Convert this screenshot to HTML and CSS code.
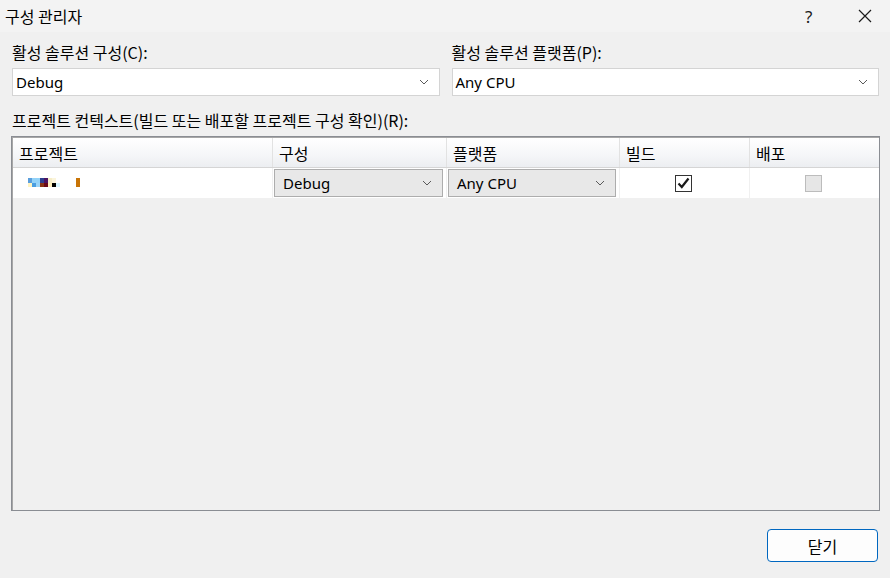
FILE: index.html
```html
<!DOCTYPE html>
<html>
<head>
  <meta charset="utf-8">
  <title>구성 관리자</title>
  <link rel="stylesheet" href="styles.css">
</head>
<body>
  <div class="titlebar">
    <span class="title">구성 관리자</span>
    <span class="title-help">?</span>
    <span class="title-close">
      <svg width="14" height="14" viewBox="0 0 14 14"><path d="M1 1 L13 13 M13 1 L1 13" stroke="#1a1a1a" stroke-width="1.2" fill="none"/></svg>
    </span>
  </div>

  <div class="content">
    <div class="solution-row">
      <div class="field">
        <label>활성 솔루션 구성(C):</label>
        <div class="combo">
          <span>Debug</span>
          <svg class="chevron" width="10" height="6" viewBox="0 0 10 6"><path d="M1 1 L5 5 L9 1" stroke="#5a5a5a" stroke-width="1" fill="none"/></svg>
        </div>
      </div>
      <div class="field">
        <label>활성 솔루션 플랫폼(P):</label>
        <div class="combo">
          <span>Any CPU</span>
          <svg class="chevron" width="10" height="6" viewBox="0 0 10 6"><path d="M1 1 L5 5 L9 1" stroke="#5a5a5a" stroke-width="1" fill="none"/></svg>
        </div>
      </div>
    </div>

    <label class="grid-label">프로젝트 컨텍스트(빌드 또는 배포할 프로젝트 구성 확인)(R):</label>

    <div class="project-grid">
      <div class="grid-head">
        <div class="head-cell">프로젝트</div>
        <div class="head-cell">구성</div>
        <div class="head-cell">플랫폼</div>
        <div class="head-cell">빌드</div>
        <div class="head-cell">배포</div>
      </div>
      <div class="grid-row">
        <div class="cell project-name">
          <svg width="56" height="10" viewBox="0 0 56 10">
            <rect x="0" y="0" width="4" height="5" fill="#5a9edc"/>
            <rect x="4" y="0" width="8" height="5" fill="#92d2f8"/>
            <rect x="12" y="0" width="4" height="5" fill="#2c3f90"/>
            <rect x="16" y="0" width="4" height="5" fill="#4b1462"/>
            <rect x="20" y="0" width="4" height="5" fill="#f6edc8"/>
            <rect x="24" y="0" width="4" height="5" fill="#fbf5dc"/>
            <rect x="0" y="5" width="4" height="4" fill="#fff4c2"/>
            <rect x="4" y="5" width="4" height="4" fill="#4a9ee0"/>
            <rect x="8" y="5" width="4" height="4" fill="#9ad4f8"/>
            <rect x="12" y="5" width="4" height="4" fill="#8a3414"/>
            <rect x="16" y="5" width="4" height="4" fill="#6a0818"/>
            <rect x="20" y="5" width="4" height="4" fill="#fff0c0"/>
            <rect x="24" y="5" width="4" height="4" fill="#000000"/>
            <rect x="28" y="5" width="4" height="4" fill="#d8f4ff"/>
            <rect x="48" y="0" width="4" height="9" fill="#c87406"/>
          </svg>
        </div>
        <div class="cell cell-combo">
          <div class="combo combo-cell">
            <span>Debug</span>
            <svg class="chevron" width="10" height="6" viewBox="0 0 10 6"><path d="M1 1 L5 5 L9 1" stroke="#5a5a5a" stroke-width="1" fill="none"/></svg>
          </div>
        </div>
        <div class="cell cell-combo">
          <div class="combo combo-cell">
            <span>Any CPU</span>
            <svg class="chevron" width="10" height="6" viewBox="0 0 10 6"><path d="M1 1 L5 5 L9 1" stroke="#5a5a5a" stroke-width="1" fill="none"/></svg>
          </div>
        </div>
        <div class="cell cell-center">
          <span class="checkbox checked">
            <svg width="13" height="12" viewBox="0 0 13 12"><path d="M1.5 6.5 L4.8 10 L11.5 1.5" stroke="#1a1a1a" stroke-width="2.2" fill="none"/></svg>
          </span>
        </div>
        <div class="cell cell-center">
          <span class="checkbox disabled"></span>
        </div>
      </div>
    </div>

    <div class="footer">
      <button class="close-button">닫기</button>
    </div>
  </div>
</body>
</html>
```

FILE: styles.css
```css
body {
  margin: 0;
  width: 890px;
  height: 578px;
  background-color: #f0f0f0;
  font-family: "Noto Sans", "Noto Sans CJK KR", sans-serif;
  font-size: 14px;
  color: #000;
  overflow: hidden;
}
.titlebar {
  height: 32px;
  display: flex;
  align-items: center;
  background-color: #f3f3f3;
  padding-left: 5px;
}
.title {
  flex: 1;
  font-size: 16px;
  font-family: "Noto Sans CJK KR", sans-serif;
}
.title-help {
  width: 53px;
  font-size: 17px;
  color: #1a1a1a;
}
.title-close {
  width: 32px;
  display: flex;
  align-items: center;
}
.content {
  padding: 0 11px 0 12px;
}
.solution-row {
  display: flex;
  gap: 12px;
  margin-top: 10px;
}
.field {
  flex: 1;
}
label {
  display: block;
  font-family: "Noto Sans CJK KR", sans-serif;
  font-size: 16px;
  line-height: 21px;
  margin-bottom: 5px;
}
.combo {
  height: 28px;
  box-sizing: border-box;
  border: 1px solid #d4d4d4;
  background-color: #ffffff;
  display: flex;
  align-items: center;
  padding: 0 10px 0 3px;
  font-size: 15px;
}
.combo span {
  flex: 1;
}
.chevron {
  display: block;
}
.grid-label {
  margin-top: 14px;
  margin-bottom: 5px;
}
.project-grid {
  height: 375px;
  box-sizing: border-box;
  border: 1px solid #8a8d93;
  box-shadow: inset 1px 1px 0 #a7a7a7;
  background-color: #f0f0f0;
  margin-left: -1px;
  margin-right: -1px;
}
.grid-head,
.grid-row {
  display: grid;
  grid-template-columns: 260px 174px 173px 130px 1fr;
}
.grid-head {
  height: 30px;
  margin: 1px 0 0 1px;
  background: linear-gradient(#ffffff, #f5f6f8 60%, #eceef1);
  border-bottom: 1px solid #d5d5d5;
  box-sizing: border-box;
}
.head-cell {
  font-family: "Noto Sans CJK KR", sans-serif;
  font-size: 16px;
  padding-left: 6px;
  display: flex;
  align-items: center;
  border-right: 1px solid #e2e2e2;
}
.head-cell:last-child {
  border-right: none;
}
.grid-row {
  height: 30px;
  margin-left: 1px;
  background-color: #ffffff;
}
.cell {
  display: flex;
  align-items: center;
  border-right: 1px solid #f0f0f0;
  padding: 1px;
}
.cell:last-child {
  border-right: none;
}
.cell-combo {
  padding-right: 3px;
}
.cell-center {
  justify-content: center;
}
.project-name {
  padding-left: 15px;
}
.combo-cell {
  flex: 1;
  height: 28px;
  border-color: #adadad;
  background-color: #e8e8e8;
  padding-left: 8px;
}
.checkbox {
  width: 17px;
  height: 17px;
  box-sizing: border-box;
  display: flex;
  align-items: center;
  justify-content: center;
}
.checkbox.checked {
  border: 1px solid #333333;
  background-color: #ffffff;
  margin-left: -3px;
}
.checkbox.disabled {
  border: 1px solid #bcbcbc;
  background-color: #e6e6e6;
  margin-left: -3px;
}
.footer {
  display: flex;
  justify-content: flex-end;
  margin-top: 18px;
}
.close-button {
  width: 111px;
  height: 33px;
  border: 1px solid #0067c0;
  border-radius: 4px;
  background-color: #fdfdfd;
  font-family: "Noto Sans CJK KR", sans-serif;
  font-size: 16px;
  margin-right: 1px;
}
```
